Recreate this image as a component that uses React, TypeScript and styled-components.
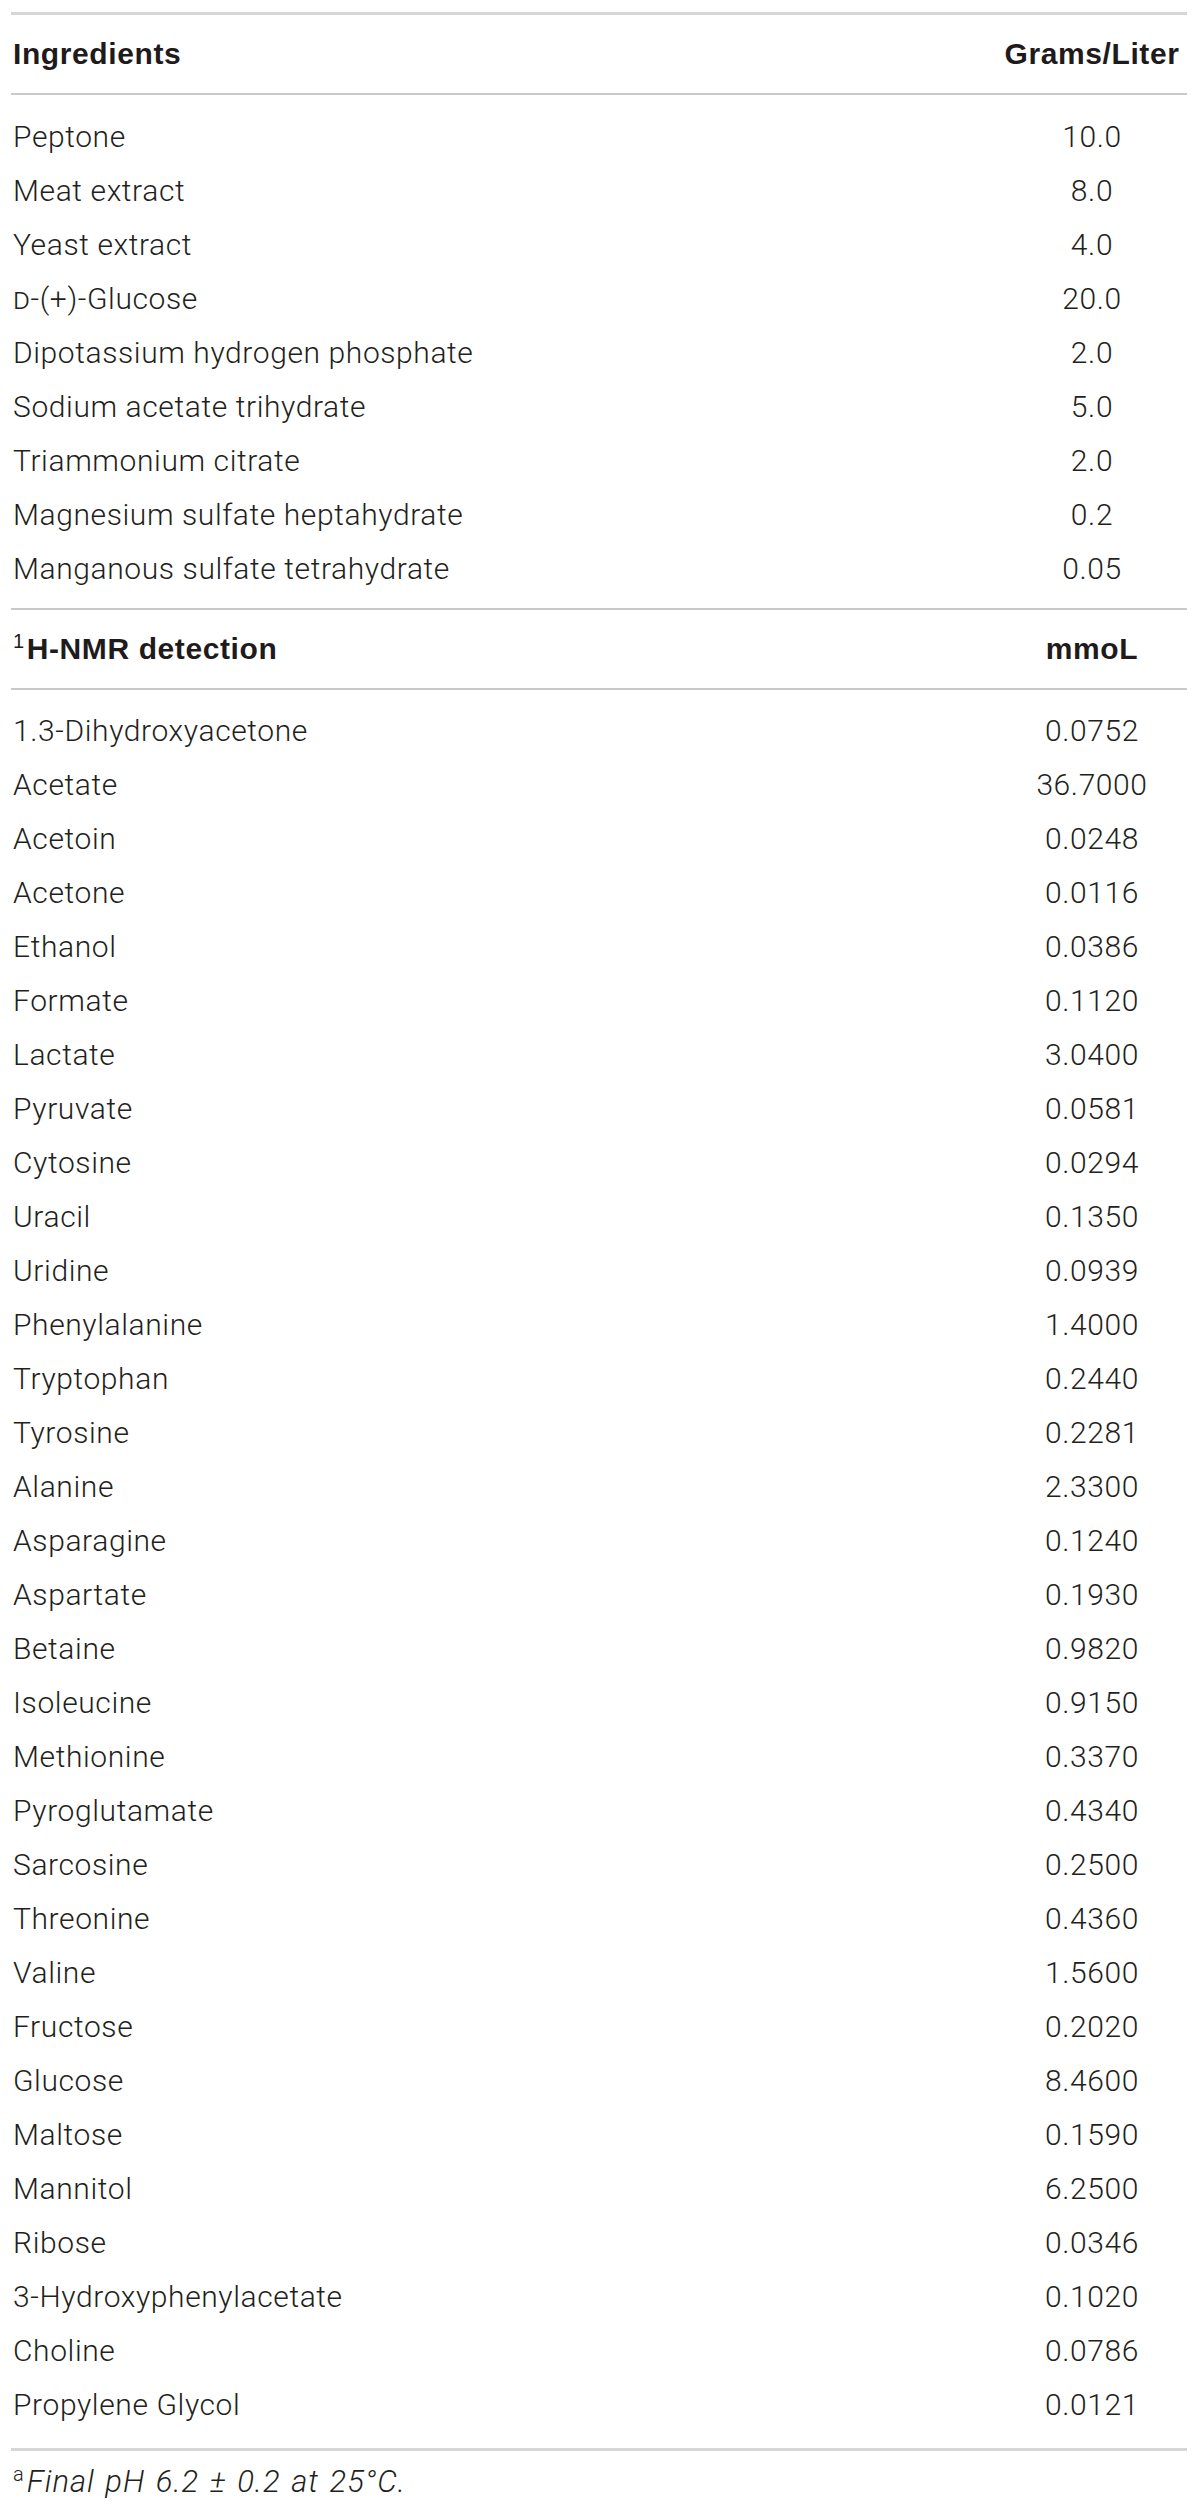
import styled, { createGlobalStyle } from "styled-components";

const GlobalStyle = createGlobalStyle`
	html, body {
		margin: 0;
		padding: 0;
		background: #ffffff;
	}
	body {
		font-family: Roboto, "Liberation Sans", Arial, sans-serif;
		color: #231f20;
	}
`;

const Page = styled.div`
	width: 1200px;
	padding: 12px 13px 0 11px;
	box-sizing: border-box;
`;

const Rule = styled.div<{ $edge?: boolean }>`
	height: ${(props) => (props.$edge ? "3px" : "2px")};
	background-color: ${(props) => (props.$edge ? "#d6d6d6" : "#c9c9c9")};
`;

const HeadRow = styled.div`
	display: grid;
	grid-template-columns: 1fr 190px;
	align-items: center;
	height: 78px;
`;

const HeadCell = styled.div<{ $center?: boolean }>`
	font-family: "Liberation Sans", Arial, sans-serif;
	font-weight: 700;
	font-size: 30px;
	letter-spacing: 0.6px;
	padding-left: ${(props) => (props.$center ? "0" : "2px")};
	text-align: ${(props) => (props.$center ? "center" : "left")};
	color: #1f1b1c;

	sup {
		font-weight: 400;
		font-size: 20px;
		vertical-align: 11px;
		line-height: 0;
		margin-right: 2px;
	}
`;

const Body = styled.div<{ $top: number; $bottom: number }>`
	padding: ${(props) => `${props.$top}px 0 ${props.$bottom}px`};
`;

const Row = styled.div`
	display: grid;
	grid-template-columns: 1fr 190px;
	height: 54px;
	line-height: 54px;
	font-size: 30px;
	font-weight: 300;
	letter-spacing: 0.6px;
	color: #231f20;
`;

const Name = styled.span`
	padding-left: 2px;
	white-space: nowrap;
`;

const Value = styled.span`
	text-align: center;
`;

const SmallCap = styled.span`
	font-variant: small-caps;
`;

const Footnote = styled.div`
	padding: 11px 0 0 2px;
	font-size: 31px;
	font-weight: 300;
	line-height: 40px;
	letter-spacing: 1px;
	word-spacing: 2px;
	color: #231f20;

	sup {
		font-size: 20px;
		vertical-align: 11px;
		line-height: 0;
		margin-right: 2px;
	}

	em {
		font-style: italic;
	}
`;

const ingredients: [React.ReactNode, string][] = [
	["Peptone", "10.0"],
	["Meat extract", "8.0"],
	["Yeast extract", "4.0"],
	[
		<>
			<SmallCap>d</SmallCap>-(+)-Glucose
		</>,
		"20.0",
	],
	["Dipotassium hydrogen phosphate", "2.0"],
	["Sodium acetate trihydrate", "5.0"],
	["Triammonium citrate", "2.0"],
	["Magnesium sulfate heptahydrate", "0.2"],
	["Manganous sulfate tetrahydrate", "0.05"],
];

const detections: [string, string][] = [
	["1.3-Dihydroxyacetone", "0.0752"],
	["Acetate", "36.7000"],
	["Acetoin", "0.0248"],
	["Acetone", "0.0116"],
	["Ethanol", "0.0386"],
	["Formate", "0.1120"],
	["Lactate", "3.0400"],
	["Pyruvate", "0.0581"],
	["Cytosine", "0.0294"],
	["Uracil", "0.1350"],
	["Uridine", "0.0939"],
	["Phenylalanine", "1.4000"],
	["Tryptophan", "0.2440"],
	["Tyrosine", "0.2281"],
	["Alanine", "2.3300"],
	["Asparagine", "0.1240"],
	["Aspartate", "0.1930"],
	["Betaine", "0.9820"],
	["Isoleucine", "0.9150"],
	["Methionine", "0.3370"],
	["Pyroglutamate", "0.4340"],
	["Sarcosine", "0.2500"],
	["Threonine", "0.4360"],
	["Valine", "1.5600"],
	["Fructose", "0.2020"],
	["Glucose", "8.4600"],
	["Maltose", "0.1590"],
	["Mannitol", "6.2500"],
	["Ribose", "0.0346"],
	["3-Hydroxyphenylacetate", "0.1020"],
	["Choline", "0.0786"],
	["Propylene Glycol", "0.0121"],
];

function App() {
	return (
		<Page>
			<GlobalStyle />
			<Rule $edge />
			<HeadRow>
				<HeadCell>Ingredients</HeadCell>
				<HeadCell $center>Grams/Liter</HeadCell>
			</HeadRow>
			<Rule />
			<Body $top={15} $bottom={12}>
				{ingredients.map(([name, value], i) => (
					<Row key={i}>
						<Name>{name}</Name>
						<Value>{value}</Value>
					</Row>
				))}
			</Body>
			<Rule />
			<HeadRow>
				<HeadCell>
					<sup>1</sup>H-NMR detection
				</HeadCell>
				<HeadCell $center>mmoL</HeadCell>
			</HeadRow>
			<Rule />
			<Body $top={14} $bottom={16}>
				{detections.map(([name, value]) => (
					<Row key={name}>
						<Name>{name}</Name>
						<Value>{value}</Value>
					</Row>
				))}
			</Body>
			<Rule $edge />
			<Footnote>
				<sup>a</sup>
				<em>Final pH 6.2 ± 0.2 at 25°C.</em>
			</Footnote>
		</Page>
	);
}

export default App;
